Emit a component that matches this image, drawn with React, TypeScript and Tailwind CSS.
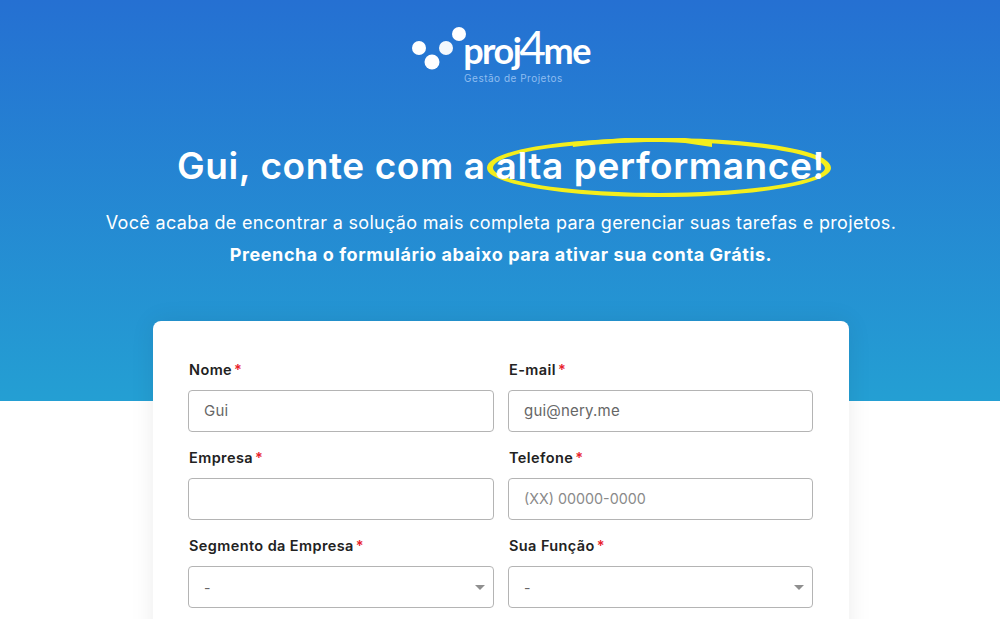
const sans = "font-['Inter','Open_Sans',sans-serif]";

function Label({ text }: { text: string }) {
  return (
    <label className="mb-[10px] block h-[20px] pl-[1px] text-[14.5px] font-semibold leading-[20px] tracking-[0.4px] text-[#222]">
      {text}
      <span className="ml-[2px] text-[#e8212b]">*</span>
    </label>
  );
}

function Field({ label, value, placeholder }: { label: string; value?: string; placeholder?: string }) {
  return (
    <div>
      <Label text={label} />
      <div className="flex h-[42px] items-center rounded-[4px] border border-[#b4b4b4] bg-white px-[15px] text-[15px] tracking-[0.2px] text-[#666]">
        {value ?? <span className="text-[14.3px] tracking-normal text-[#8a8a8a]">{placeholder}</span>}
      </div>
    </div>
  );
}

function SelectField({ label }: { label: string }) {
  return (
    <div>
      <Label text={label} />
      <div className="flex h-[42px] items-center justify-between rounded-[4px] border border-[#b4b4b4] bg-white pl-[15px] pr-[8px] text-[14px] text-[#666]">
        <span>-</span>
        <span className="h-0 w-0 border-x-[5px] border-t-[5px] border-x-transparent border-t-[#8f8f8f]" />
      </div>
    </div>
  );
}

function Logo() {
  return (
    <div className="flex flex-col items-center">
      <div className="flex h-[46px] items-start">
        <svg width="53" height="46" viewBox="0 0 53 46" className="overflow-visible">
          <circle cx="9" cy="21" r="7" fill="#fff" />
          <circle cx="36" cy="21" r="7" fill="#fff" opacity="0.95" />
          <circle cx="22" cy="35" r="7.5" fill="#fff" />
          <circle cx="49" cy="7" r="7" fill="#fff" />
        </svg>
        <span className="mt-[2px] font-['Lato',sans-serif] text-[36px] font-bold leading-[36px] tracking-[-1.5px] text-white">
          proj<span className="mx-[-1px] text-[46px] font-normal leading-[36px]">4</span>me
        </span>
      </div>
      <span className="ml-[27px] mt-[-1px] text-[10px] leading-[12px] tracking-[0.5px] text-[#8fbdf0]">
        Gestão de Projetos
      </span>
    </div>
  );
}

export default function App() {
  return (
    <div
      className={`${sans} h-[619px] overflow-hidden bg-white bg-[linear-gradient(180deg,#2570d2_0%,#249fd3_100%)] bg-[length:100%_401px] bg-no-repeat`}
    >
      <header className="flex flex-col items-center pt-[27px] text-white">
        <Logo />
        <h1 className="mt-[60px] pl-[2px] text-[37px] font-semibold leading-[44px] tracking-[0.6px]">
          Gui, conte com a{" "}
          <span className="relative inline-block">
            <svg
              viewBox="0 0 348 64"
              className="absolute left-[-11px] top-[-9px] h-[64px] w-[348px]"
              fill="#f4ee1c"
            >
              <path
                fillRule="evenodd"
                d="M2 33C2 14 85 3 174 3c88 0 172 11 172 30 0 17-84 29-172 29C85 62 2 50 2 33ZM8 33c1 14 80 25 166 25 86 0 165-11 166-25C339 18 260 7 174 7 88 7 9 17 8 33Z"
              />
              <path d="M87 7 140 3h60l27 4v5l-27-4c-30-2-70-1-112 4Z" />
            </svg>
            <span className="relative">alta performance!</span>
          </span>
        </h1>
        <p className="mt-[22px] pl-[2px] text-[18px] leading-[26px] tracking-[0.32px]">
          Você acaba de encontrar a solução mais completa para gerenciar suas tarefas e projetos.
        </p>
        <p className="mt-[6px] pl-[2px] text-[18px] font-bold leading-[26px] tracking-[0.58px]">
          Preencha o formulário abaixo para ativar sua conta Grátis.
        </p>
      </header>

      <main className="ml-[153px] mt-[53px] w-[696px] rounded-[8px] bg-white px-[35px] pb-[40px] pt-[39px] shadow-[0_0_24px_rgba(0,0,0,0.08)]">
        <div className="grid grid-cols-[306px_305px] gap-x-[14px] gap-y-[16px]">
          <Field label="Nome" value="Gui" />
          <Field label="E-mail" value="gui@nery.me" />
          <Field label="Empresa" value="" />
          <Field label="Telefone" placeholder="(XX) 00000-0000" />
          <SelectField label="Segmento da Empresa" />
          <SelectField label="Sua Função" />
        </div>
      </main>
    </div>
  );
}
